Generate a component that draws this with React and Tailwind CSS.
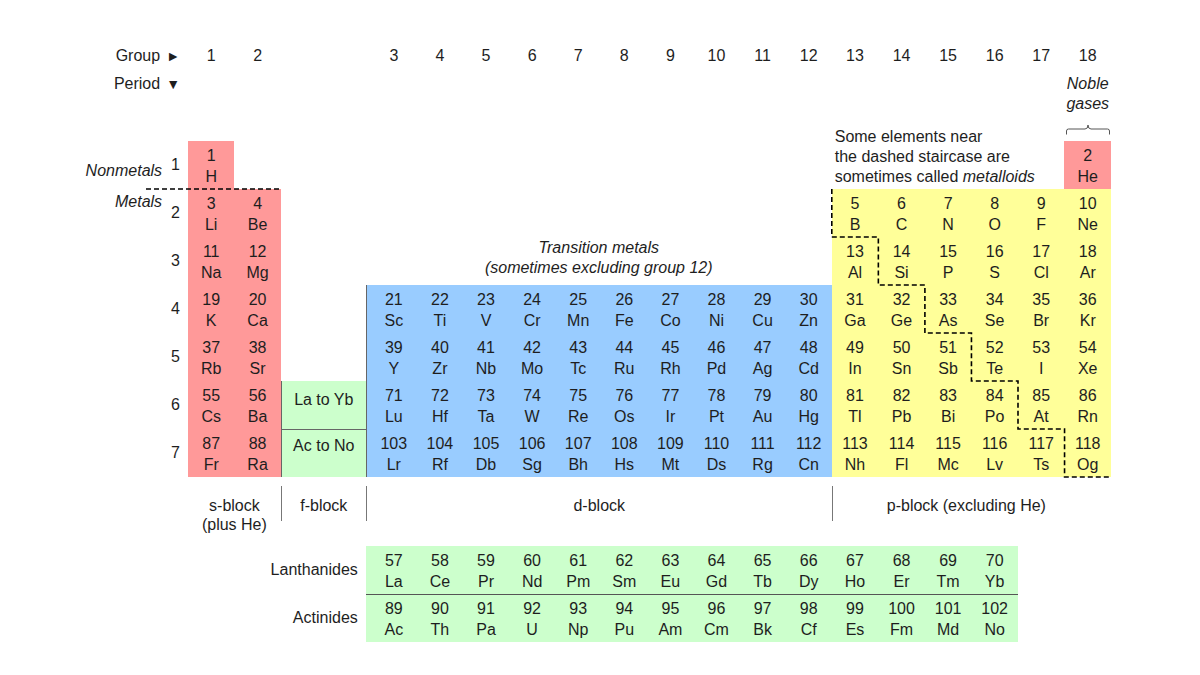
import React from 'react';

const COL = ['', 'col-start-1', 'col-start-2', 'col-start-3', 'col-start-4', 'col-start-5', 'col-start-6', 'col-start-7', 'col-start-8', 'col-start-9', 'col-start-10', 'col-start-11', 'col-start-12', 'col-start-13', 'col-start-14', 'col-start-15', 'col-start-16', 'col-start-17', 'col-start-18', 'col-start-19', 'col-start-20', 'col-start-21'];
const ROW = ['', 'row-start-1', 'row-start-2', 'row-start-3', 'row-start-4', 'row-start-5', 'row-start-6', 'row-start-7', 'row-start-8', 'row-start-9', 'row-start-10', 'row-start-11', 'row-start-12'];

// grid column for a group number (spacer column sits between f-block and group 3)
const colOf = (g) => (g <= 2 ? g + 1 : g + 3);

const seq = (z, g, syms, row) => syms.split(' ').map((s, i) => ({ z: z + i, sym: s, g: g + i, row }));

const elements = [
  { z: 1, sym: 'H', g: 1, row: 3 },
  { z: 2, sym: 'He', g: 18, row: 3 },
  ...seq(3, 1, 'Li Be', 4),
  ...seq(5, 13, 'B C N O F Ne', 4),
  ...seq(11, 1, 'Na Mg', 5),
  ...seq(13, 13, 'Al Si P S Cl Ar', 5),
  ...seq(19, 1, 'K Ca Sc Ti V Cr Mn Fe Co Ni Cu Zn Ga Ge As Se Br Kr', 6),
  ...seq(37, 1, 'Rb Sr Y Zr Nb Mo Tc Ru Rh Pd Ag Cd In Sn Sb Te I Xe', 7),
  ...seq(55, 1, 'Cs Ba', 8),
  ...seq(71, 3, 'Lu Hf Ta W Re Os Ir Pt Au Hg Tl Pb Bi Po At Rn', 8),
  ...seq(87, 1, 'Fr Ra', 9),
  ...seq(103, 3, 'Lr Rf Db Sg Bh Hs Mt Ds Rg Cn Nh Fl Mc Lv Ts Og', 9),
  ...seq(57, 3, 'La Ce Pr Nd Pm Sm Eu Gd Tb Dy Ho Er Tm Yb', 11),
  ...seq(89, 3, 'Ac Th Pa U Np Pu Am Cm Bk Cf Es Fm Md No', 12),
];

const groups = Array.from({ length: 18 }, (_, i) => i + 1);
const periods = [1, 2, 3, 4, 5, 6, 7];

const Cell = ({ el }) => (
  <div className={`${COL[colOf(el.g)]} ${ROW[el.row]} flex flex-col items-center pt-[4px] leading-[21px]`}>
    <span>{el.z}</span>
    <span>{el.sym}</span>
  </div>
);

const App = () => {
  return (
    <div className="w-[1200px] h-[675px] overflow-hidden bg-white pt-[42px] text-[16px] text-[#1e1e1e] [font-family:'Liberation_Sans',Arial,sans-serif]">
      <div className="relative grid grid-cols-[188px_46.4px_46.4px_85px_5px_repeat(10,46.1px)_repeat(6,46.55px)] grid-rows-[26px_73px_repeat(7,48px)_69px_48px_48px]">
        {/* colour blocks */}
        <div className="col-start-2 row-start-3 bg-[#ff9999]" />
        <div className="col-start-2 col-end-4 row-start-4 row-end-10 bg-[#ff9999]" />
        <div className="col-start-21 row-start-3 bg-[#ff9999]" />
        <div className="col-start-5 col-end-16 row-start-6 row-end-10 bg-[#99ccff] border-l border-[#666]" />
        <div className="col-start-16 col-end-22 row-start-4 row-end-10 bg-[#ffff99]" />
        <div className="col-start-4 row-start-8 bg-[#ccffcc] border-l border-[#666] text-center pt-[9px] leading-[20px]">La to Yb</div>
        <div className="col-start-4 row-start-9 bg-[#ccffcc] border-l border-t border-[#666] text-center pt-[6px] leading-[20px]">Ac to No</div>
        <div className="col-start-5 col-end-20 row-start-11 bg-[#ccffcc]" />
        <div className="col-start-5 col-end-20 row-start-12 bg-[#ccffcc] border-t border-[#555]" />

        {/* header */}
        <div className="col-start-1 row-start-1 flex items-center justify-end gap-[6px] pr-[8px] pt-[2px]">
          <span>Group</span>
          <span className="text-[14px]">►</span>
        </div>
        {groups.map((g) => (
          <div key={g} className={`${COL[colOf(g)]} row-start-1 flex items-center justify-center pt-[2px]`}>{g}</div>
        ))}
        <div className="col-start-1 row-start-2 flex items-start justify-end gap-[6px] pr-[8px] pt-[6px] leading-[20px]">
          <span>Period</span>
          <span className="text-[14px]">▼</span>
        </div>
        <div className="col-start-21 row-start-2 flex flex-col items-center pt-[6px] leading-[20px] italic">
          <span>Noble</span>
          <span>gases</span>
          <svg width="46" height="11" className="mt-[10px]" fill="none" stroke="#555" strokeWidth="1">
            <path d="M1.5,10.5 V7 Q1.5,5 3.5,5 H20 Q23,5 23,1 Q23,5 26,5 H42.5 Q44.5,5 44.5,7 V10.5" />
          </svg>
        </div>
        <div className="col-start-16 col-end-21 row-start-2 row-end-4 self-end pl-[3px] pb-[2px] leading-[20px] whitespace-nowrap">
          <div>Some elements near</div>
          <div>the dashed staircase are</div>
          <div>sometimes called <i>metalloids</i></div>
        </div>
        <div className="col-start-5 col-end-16 row-start-4 row-end-6 self-end pb-[7px] text-center italic leading-[20px]">
          <div>Transition metals</div>
          <div>(sometimes excluding group 12)</div>
        </div>

        {/* period labels */}
        {periods.map((p) => (
          <div key={p} className={`col-start-1 ${ROW[p + 2]} flex items-center justify-end gap-[9px] pr-[8px]`}>
            {p === 1 && <span className="self-end mb-[8px] italic leading-[20px]">Nonmetals</span>}
            {p === 2 && <span className="self-start mt-[3px] italic leading-[20px]">Metals</span>}
            <span>{p}</span>
          </div>
        ))}

        {elements.map((el) => (
          <Cell key={el.z} el={el} />
        ))}

        {/* block labels */}
        <div className="col-start-2 col-end-4 row-start-10 pt-[19px] text-center leading-[19px]">
          <div>s-block</div>
          <div>(plus He)</div>
        </div>
        <div className="col-start-4 row-start-10 self-start mt-[9px] h-[35px] border-l border-[#777] pt-[10px] text-center leading-[20px]">f-block</div>
        <div className="col-start-5 col-end-16 row-start-10 self-start mt-[9px] h-[35px] border-l border-[#777] pt-[10px] text-center leading-[20px]">d-block</div>
        <div className="col-start-16 col-end-22 row-start-10 self-start mt-[9px] h-[35px] border-l border-[#777] pt-[10px] pr-[11px] text-center leading-[20px]">p-block (excluding He)</div>

        <div className="col-start-2 col-end-5 row-start-11 flex items-center justify-end pr-[8px]">Lanthanides</div>
        <div className="col-start-2 col-end-5 row-start-12 flex items-center justify-end pr-[8px]">Actinides</div>

        {/* dashed lines */}
        <svg className="pointer-events-none absolute left-0 top-0 h-full w-full" fill="none" stroke="#000" strokeWidth="1.6" strokeDasharray="5 3">
          <path d="M146,147 H281" />
          <path d="M831.8,147 V195 H878.35 V243 H924.9 V291 H971.45 V339 H1018 V387 H1064.55 V435 H1111" />
        </svg>
      </div>
    </div>
  );
};

export default App;
